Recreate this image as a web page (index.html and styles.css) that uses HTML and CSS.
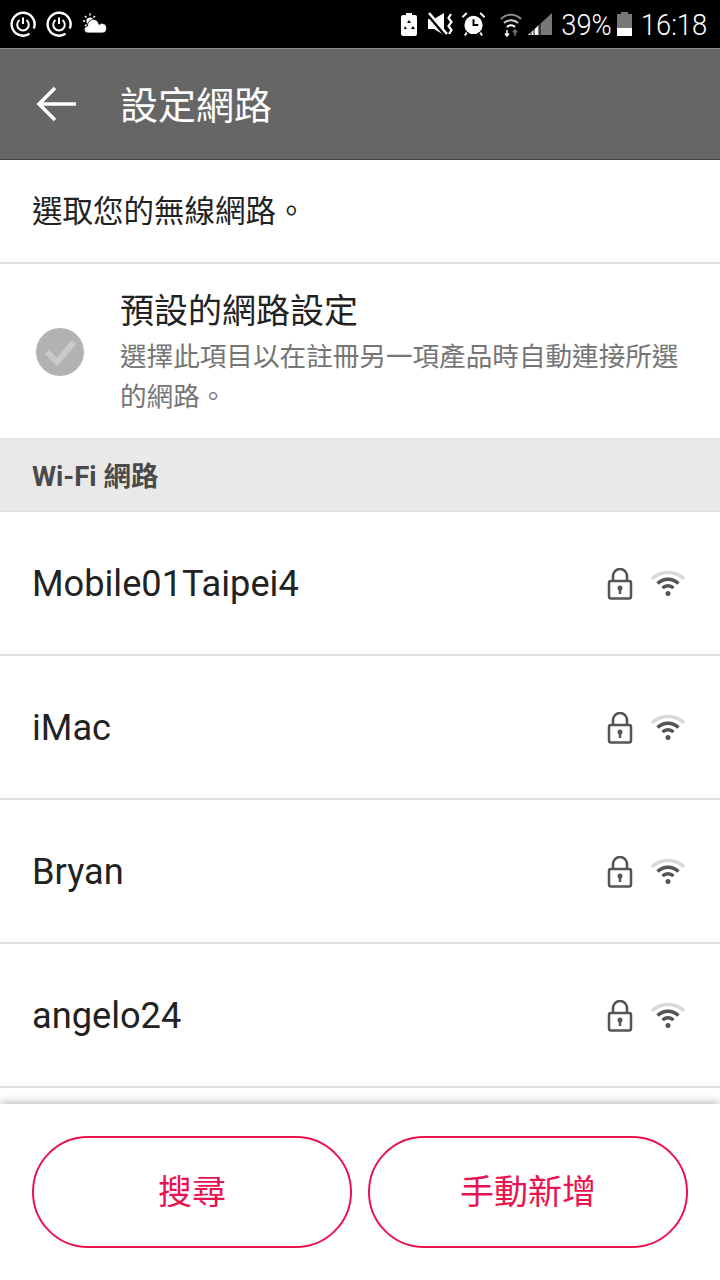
FILE: index.html
```html
<!DOCTYPE html>
<html lang="zh-TW">
<head>
    <meta charset="UTF-8">
    <meta name="viewport" content="width=device-width, initial-scale=1.0">
    <title>設定網路</title>
    <link rel="stylesheet" href="styles.css">
</head>
<body>
    <div class="status-bar">
        <div class="status-left">
            <svg width="26" height="26" viewBox="0 0 26 26" fill="none" stroke="#fff"><path d="M19.500 22.800A11.500 11.500 0 1 1 23.800 17.500" stroke-width="2.400"/><path d="M9.500 9a5.800 5.800 0 1 0 7 0" stroke-width="2"/><path d="M13 6.500v6.500" stroke-width="2"/></svg>
            <svg width="26" height="26" viewBox="0 0 26 26" fill="none" stroke="#fff"><path d="M19.500 22.800A11.500 11.500 0 1 1 23.800 17.500" stroke-width="2.400"/><path d="M9.500 9a5.800 5.800 0 1 0 7 0" stroke-width="2"/><path d="M13 6.500v6.500" stroke-width="2"/></svg>
            <svg width="26" height="26" viewBox="0 0 26 26"><circle cx="8" cy="10" r="3.600" fill="#fff"/><path d="M8 2.500v2M1 10h2M3 5l1.500 1.500M13 5l-1.500 1.500M3 15l1.500-1.500" stroke="#fff" stroke-width="1.500"/><path d="M6 22a3.500 3.500 0 0 1-.5-7 6 6 0 0 1 6-6.500c3 0 5 2 5.500 5a4.500 4.500 0 0 1 7.500 4c0 2.500-1.500 4.500-4 4.500z" fill="#fff" stroke="#000" stroke-width=".8"/></svg>
        </div>
        <div class="status-right">
            <svg width="16" height="24" viewBox="0 0 16 24"><path d="M5 1h6v2h3a2 2 0 0 1 2 2v17a2 2 0 0 1-2 2H2a2 2 0 0 1-2-2V5a2 2 0 0 1 2-2h3z" fill="#fff"/><path d="M8 8l2 3H6zM4 14l2 3H3zM12 14l2 3h-4z" fill="#000"/></svg>
            <svg class="st-mute" width="26" height="24" viewBox="0 0 26 24"><path d="M0 7h6l10-6v22L6 17H0z" fill="#fff"/><path d="M0 3l17 20" stroke="#000" stroke-width="3"/><path d="M1 1l18 21" stroke="#fff" stroke-width="2.500"/><path d="M23 2l-2.500 4 3 4-3 4 3 4-2.500 4" fill="none" stroke="#fff" stroke-width="2.200"/></svg>
            <svg class="st-alarm" width="25" height="26" viewBox="0 0 26 26"><circle cx="13" cy="14" r="9.500" fill="#fff"/><path d="M13 8v6h5" fill="none" stroke="#000" stroke-width="2"/><path d="M1.500 6L6 1.500M24.500 6L20 1.500M6 22l-2 3M20 22l2 3" stroke="#fff" stroke-width="2"/></svg>
            <svg class="st-wifi" width="22" height="26" viewBox="0 0 22 26" fill="none" stroke="#8a8a8a" stroke-width="2"><path d="M1 8a14 14 0 0 1 20 0"/><path d="M4 12a10 10 0 0 1 14 0" stroke="#ccc"/><path d="M7 16a5.500 5.500 0 0 1 8 0" stroke="#fff"/><path d="M7 19v6M5 22.500l2 2.500 2-2.500" stroke="#fff" stroke-width="1.500"/><path d="M15 19v6M13 21.500l2-2.500 2 2.500" stroke="#777" stroke-width="1.500"/></svg>
            <svg class="st-signal" width="24" height="24" viewBox="0 0 24 24"><path d="M0 23L24 1v22z" fill="#777"/><path d="M0 23l10-9v9z" fill="#fff"/><path d="M12 23V11" stroke="#000"/><path d="M3 23v-4M6 23v-6" stroke="#000"/></svg>
            <span class="st-text st-pct">39%</span>
            <svg class="st-battery" width="15" height="26" viewBox="0 0 15 26"><path d="M4 1h7v2h4v22H0V3h4z" fill="#777"/><path d="M0 17h15v8H0z" fill="#fff"/></svg>
            <span class="st-text st-time">16:18</span>
        </div>
    </div>

    <header class="app-bar">
        <svg class="back" width="42" height="36" viewBox="0 0 42 36" fill="none" stroke="#fff" stroke-width="3.500"><path d="M40 18H4M19 2L3 18l16 16"/></svg>
        <h1>設定網路</h1>
    </header>

    <div class="intro">選取您的無線網路。</div>

    <div class="preset">
        <svg class="check" width="48" height="48" viewBox="0 0 48 48"><circle cx="24" cy="24" r="24" fill="#b2b2b2"/><path d="M11 24l10 10 17-20" fill="none" stroke="#c9c9c9" stroke-width="6"/></svg>
        <div class="preset-text">
            <div class="preset-title">預設的網路設定</div>
            <div class="preset-desc">選擇此項目以在註冊另一項產品時自動連接所選的網路。</div>
        </div>
    </div>

    <div class="section">Wi-Fi 網路</div>

    <div class="networks">
        <div class="net-row">
            <span class="net-name">Mobile01Taipei4</span>
            <svg class="lock" width="26" height="32" viewBox="0 0 26 32" fill="none" stroke="#555" stroke-width="2.500"><rect x="2" y="13" width="22" height="17.500" rx="2"/><path d="M6 13V8a7 7 0 0 1 14 0v5"/><circle cx="13" cy="20" r="2.500" fill="#555" stroke="none"/><path d="M13 20v6"/></svg>
            <svg class="wifi" width="36" height="28" viewBox="0 0 36 28" fill="none" stroke-width="3.500"><path d="M2 10a23 23 0 0 1 32 0" stroke="#d9d9d9"/><path d="M7.500 14.500a15 15 0 0 1 21 0" stroke="#555"/><path d="M12.500 19a8 8 0 0 1 11 0" stroke="#555"/><circle cx="18" cy="24.500" r="2.500" fill="#555"/></svg>
        </div>
        <div class="net-row">
            <span class="net-name">iMac</span>
            <svg class="lock" width="26" height="32" viewBox="0 0 26 32" fill="none" stroke="#555" stroke-width="2.500"><rect x="2" y="13" width="22" height="17.500" rx="2"/><path d="M6 13V8a7 7 0 0 1 14 0v5"/><circle cx="13" cy="20" r="2.500" fill="#555" stroke="none"/><path d="M13 20v6"/></svg>
            <svg class="wifi" width="36" height="28" viewBox="0 0 36 28" fill="none" stroke-width="3.500"><path d="M2 10a23 23 0 0 1 32 0" stroke="#d9d9d9"/><path d="M7.500 14.500a15 15 0 0 1 21 0" stroke="#555"/><path d="M12.500 19a8 8 0 0 1 11 0" stroke="#555"/><circle cx="18" cy="24.500" r="2.500" fill="#555"/></svg>
        </div>
        <div class="net-row">
            <span class="net-name">Bryan</span>
            <svg class="lock" width="26" height="32" viewBox="0 0 26 32" fill="none" stroke="#555" stroke-width="2.500"><rect x="2" y="13" width="22" height="17.500" rx="2"/><path d="M6 13V8a7 7 0 0 1 14 0v5"/><circle cx="13" cy="20" r="2.500" fill="#555" stroke="none"/><path d="M13 20v6"/></svg>
            <svg class="wifi" width="36" height="28" viewBox="0 0 36 28" fill="none" stroke-width="3.500"><path d="M2 10a23 23 0 0 1 32 0" stroke="#d9d9d9"/><path d="M7.500 14.500a15 15 0 0 1 21 0" stroke="#555"/><path d="M12.500 19a8 8 0 0 1 11 0" stroke="#555"/><circle cx="18" cy="24.500" r="2.500" fill="#555"/></svg>
        </div>
        <div class="net-row">
            <span class="net-name">angelo24</span>
            <svg class="lock" width="26" height="32" viewBox="0 0 26 32" fill="none" stroke="#555" stroke-width="2.500"><rect x="2" y="13" width="22" height="17.500" rx="2"/><path d="M6 13V8a7 7 0 0 1 14 0v5"/><circle cx="13" cy="20" r="2.500" fill="#555" stroke="none"/><path d="M13 20v6"/></svg>
            <svg class="wifi" width="36" height="28" viewBox="0 0 36 28" fill="none" stroke-width="3.500"><path d="M2 10a23 23 0 0 1 32 0" stroke="#d9d9d9"/><path d="M7.500 14.500a15 15 0 0 1 21 0" stroke="#555"/><path d="M12.500 19a8 8 0 0 1 11 0" stroke="#555"/><circle cx="18" cy="24.500" r="2.500" fill="#555"/></svg>
        </div>
    </div>

    <footer class="actions">
        <button class="pill">搜尋</button>
        <button class="pill">手動新增</button>
    </footer>
</body>
</html>
```

FILE: styles.css
```css
* {
    margin: 0;
    padding: 0;
    box-sizing: border-box;
}

body {
    width: 720px;
    height: 1280px;
    overflow: hidden;
    display: flex;
    flex-direction: column;
    background-color: #fff;
    color: #222;
    font-family: 'Roboto', 'Noto Sans CJK TC', sans-serif;
}

/* Status bar */
.status-bar {
    height: 48px;
    flex-shrink: 0;
    background-color: #000;
    display: flex;
    justify-content: space-between;
    align-items: center;
    padding: 0 14px 0 10px;
    color: #fff;
}

.status-left, .status-right {
    display: flex;
    align-items: center;
}

.status-left {
    gap: 10px;
}

.st-mute {
    margin-left: 11px;
}

.st-alarm {
    margin-left: 7px;
}

.st-wifi {
    margin-left: 14px;
}

.st-signal {
    margin-left: 6px;
}

.st-text {
    display: flex;
    justify-content: center;
    font-size: 30px;
    font-weight: 300;
    white-space: nowrap;
    transform: scaleX(0.91);
}

.st-pct {
    width: 47px;
    margin-left: 11px;
}

.st-battery {
    margin-left: 7px;
}

.st-time {
    width: 64px;
    margin-left: 10px;
}

/* App bar */
.app-bar {
    height: 112px;
    flex-shrink: 0;
    display: flex;
    align-items: center;
    background-color: #666;
    border-top: 1px solid #8c8c8c;
    border-bottom: 1px solid #444;
}

.back {
    margin-left: 36px;
}

.app-bar h1 {
    margin: 0 0 4px 42px;
    font-size: 38px;
    font-weight: 400;
    color: #fff;
}

/* Intro */
.intro {
    height: 104px;
    flex-shrink: 0;
    padding: 0 32px 4px;
    display: flex;
    align-items: center;
    font-size: 30.500px;
    border-bottom: 2px solid #e0e0e0;
}

/* Default network toggle */
.preset {
    height: 174px;
    flex-shrink: 0;
    display: flex;
    align-items: center;
    padding: 0 32px 0 36px;
}

.check {
    flex-shrink: 0;
    margin-top: 2px;
}

.preset-text {
    margin-left: 36px;
}

.preset-title {
    font-size: 34px;
    line-height: 44px;
    margin-top: 4px;
}

.preset-desc {
    margin-top: 4px;
    font-size: 26.600px;
    line-height: 40px;
    color: #757575;
}

/* Section title */
.section {
    height: 74px;
    flex-shrink: 0;
    display: flex;
    align-items: center;
    padding: 0 32px 2px;
    background-color: #e9e9e9;
    border-top: 1px solid #e0e0e0;
    border-bottom: 1px solid #e0e0e0;
    color: #4a4a4a;
    font-size: 27.500px;
    font-weight: 700;
}

/* Network list */
.networks {
    flex: 1;
    overflow: hidden;
}

.net-row {
    height: 144px;
    display: flex;
    align-items: center;
    padding: 0 34px 0 32px;
    border-bottom: 2px solid #e0e0e0;
}

.net-name {
    flex: 1;
    font-size: 36.200px;
    margin-top: 1px;
}

.lock {
    margin-top: 2px;
}

.wifi {
    margin-left: 17px;
}

/* Bottom buttons */
.actions {
    height: 176px;
    flex-shrink: 0;
    display: flex;
    gap: 16px;
    padding: 32px;
    background-color: #fff;
    box-shadow: 0 -2px 8px rgba(0, 0, 0, 0.25);
}

.pill {
    flex: 1;
    height: 112px;
    padding-bottom: 6px;
    border: 2px solid #e8134f;
    border-radius: 56px;
    background-color: #fff;
    color: #e8134f;
    font-family: inherit;
    font-size: 34px;
}
```
